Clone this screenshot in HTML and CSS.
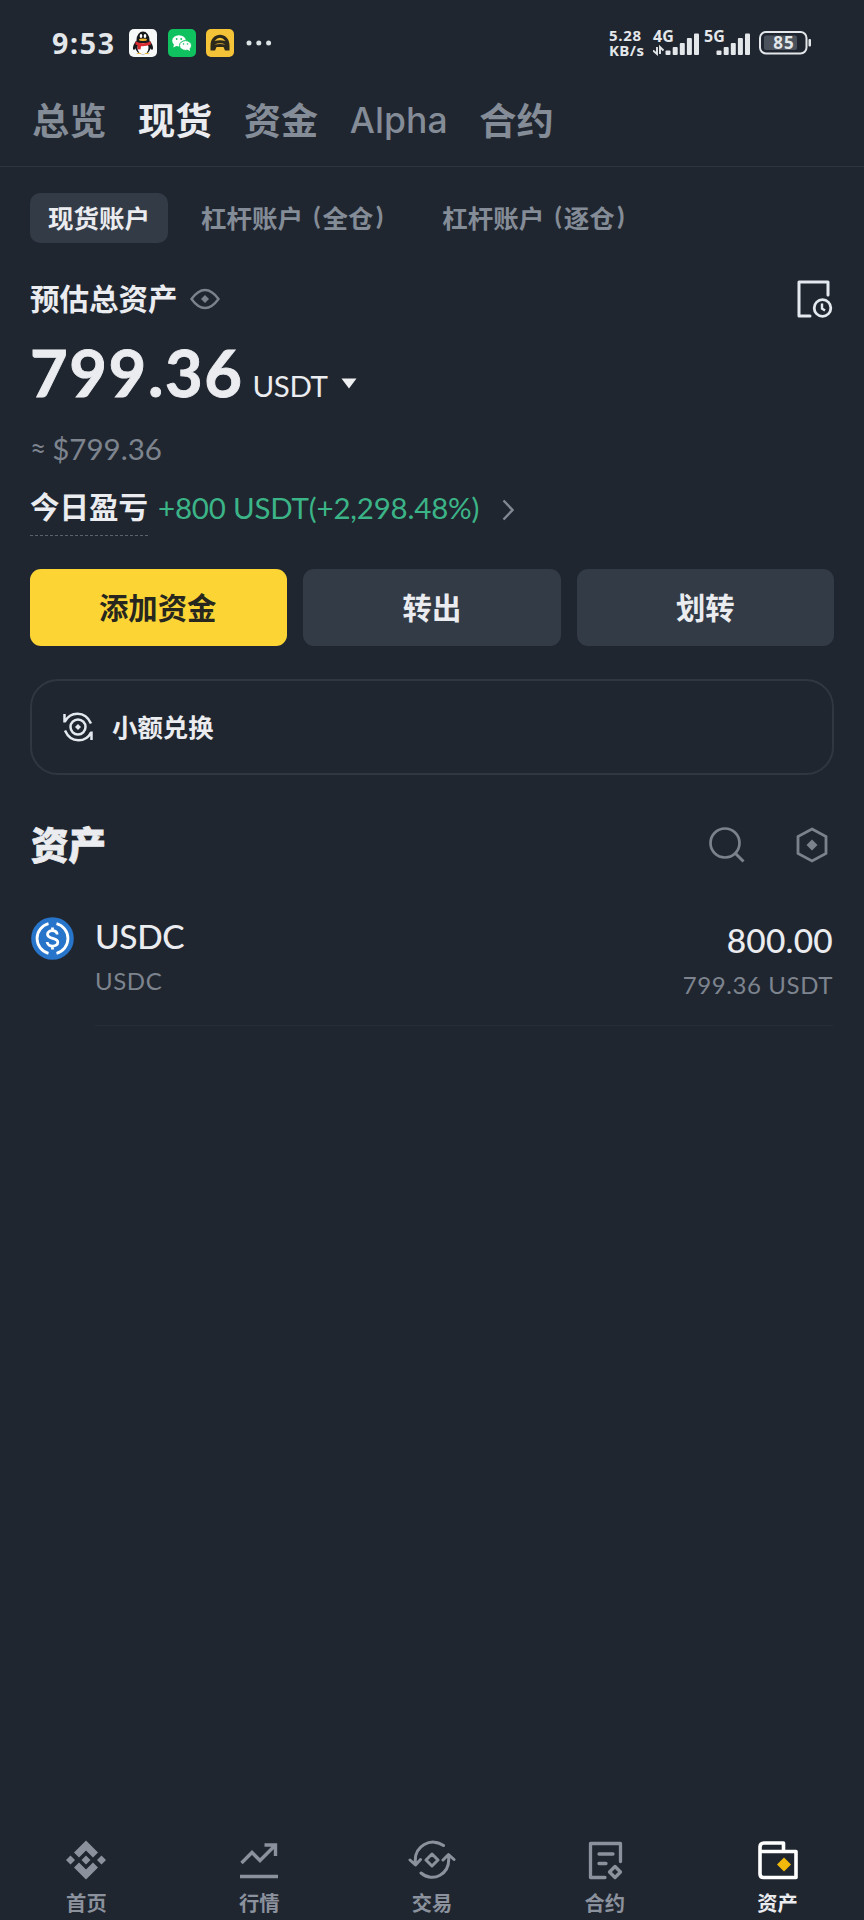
FILE: index.html
```html
<!DOCTYPE html>
<html lang="zh-CN">
<head>
<meta charset="utf-8">
<title>资产</title>
<link rel="stylesheet" href="styles.css">
</head>
<body>
<div class="screen">
  <header class="status">
    <span class="clock">9:53</span>
    <svg class="app" viewBox="0 0 28 28"><rect width="28" height="28" rx="5" fill="#f7f8f8"/><path d="M7 12C4 16 3 20 5 21l3-3zM21 12c3 4 4 8 2 9l-3-3z" fill="#16181b"/><ellipse cx="14" cy="17" rx="8" ry="8.500" fill="#16181b"/><ellipse cx="14" cy="19" rx="5.500" ry="6.500" fill="#fff"/><path d="M7.500 11a6.500 8.500 0 0 1 13 0l0 3h-13z" fill="#16181b"/><ellipse cx="12" cy="7" rx="1.300" ry="1.900" fill="#fff"/><ellipse cx="16" cy="7" rx="1.300" ry="1.900" fill="#fff"/><ellipse cx="14" cy="10.700" rx="4" ry="1.200" fill="#efb52c"/><path d="M6.500 12.500q7.500 3.500 15 0l.5 3q-5 2-10 1.700l-.5 3.300-3-.3.200-4-2.200-.7z" fill="#d92c30"/><path d="M7 25q3-2 6 0zM15 25q3-2 6 0z" fill="#efb52c"/></svg>
    <svg class="app" viewBox="0 0 28 28"><rect width="28" height="28" rx="5" fill="#10c160"/><ellipse cx="11" cy="11.800" rx="6.800" ry="5.600" fill="#fff"/><path d="M6 15l-.7 3.500 4-2z" fill="#fff"/><ellipse cx="17.500" cy="16.500" rx="6" ry="4.900" fill="#fff" stroke="#10c160"/><path d="M19 20.500l3 1.500-.5-3z" fill="#fff"/><g fill="#10c160"><circle cx="8.700" cy="10" r=".9"/><circle cx="13.200" cy="10" r=".9"/><circle cx="15.500" cy="15" r=".8"/><circle cx="19.500" cy="15" r=".8"/></g></svg>
    <svg class="app" viewBox="0 0 28 28"><rect width="28" height="28" rx="5" fill="#f5c338"/><path d="M4.500 21.500v-5C4.500 2 23.500 2 23.500 16.500v5h-4.500l-1.500-3.500h-7L9 21.500z" fill="#2b281c"/><path d="M8.500 12Q14 5.500 19.500 12 14 10.500 8.500 12zM8.500 15.500q5.500-2.500 11 0-5.500-.8-11 0z" fill="#f5c338"/></svg>
    <svg class="more" viewBox="0 0 26 6"><g fill="#dde2e5"><circle cx="3" cy="3" r="2.500"/><circle cx="12.800" cy="3" r="2.500"/><circle cx="22.600" cy="3" r="2.500"/></g></svg>
    <span class="speed"><span>5.28</span><span class="unit">KB/s</span></span>
    <span class="signal"><span class="net">4G</span><svg viewBox="0 0 46 28"><g fill="#e3e7ea"><rect x="12.500" y="21.500" width="5" height="4.500" rx="1"/><rect x="19.700" y="18" width="5" height="8" rx="1"/><rect x="26.800" y="14" width="5" height="12" rx="1"/><rect x="33.900" y="9" width="5" height="17" rx="1"/><rect x="41" y="4.500" width="5" height="21.500" rx="1"/></g><path d="M4 18v7L0 21.500M7 25v-7l3.500 3.500" fill="none" stroke="#e3e7ea" stroke-width="1.900"/></svg></span>
    <span class="signal second"><span class="net">5G</span><svg viewBox="0 0 46 28"><g fill="#e3e7ea"><rect x="12.500" y="21.500" width="5" height="4.500" rx="1"/><rect x="19.700" y="18" width="5" height="8" rx="1"/><rect x="26.800" y="14" width="5" height="12" rx="1"/><rect x="33.900" y="9" width="5" height="17" rx="1"/><rect x="41" y="4.500" width="5" height="21.500" rx="1"/></g></svg></span>
    <svg class="battery" viewBox="0 0 53 24"><rect x="1" y="1" width="46.500" height="21.500" rx="6" fill="none" stroke="#e3e7ea" stroke-width="2"/><rect x="5" y="4.500" width="33" height="14.500" rx="2" fill="#4b525b"/><rect x="49.500" y="8" width="2.500" height="7.500" rx="1" fill="#e3e7ea"/><text x="25" y="18" class="level">85</text></svg>
  </header>

  <nav class="tabs">
    <span>总览</span><span class="on">现货</span><span>资金</span><span class="alpha">Alpha</span><span>合约</span>
  </nav>

  <main class="content">
    <div class="pills">
      <span class="pill on">现货账户</span>
      <span class="pill">杠杆账户<i>(</i>全仓<b>)</b></span>
      <span class="pill">杠杆账户<i>(</i>逐仓<b>)</b></span>
    </div>

    <div class="estimate">
      <span>预估总资产</span>
      <svg class="eye" viewBox="0 0 30 22"><path d="M1.500 11Q8 2 15 2t13.500 9Q22 20 15 20T1.500 11z" fill="none" stroke="#7b828c" stroke-width="2.400"/><path d="M15 7l4 4-4 4-4-4z" fill="#7b828c"/></svg>
      <svg class="record" viewBox="0 0 36 38"><path d="M13 36H2V2h29v13" fill="none" stroke="#e4e9ef" stroke-width="3" stroke-linecap="round" stroke-linejoin="round"/><circle cx="25.500" cy="28" r="8.300" fill="none" stroke="#e4e9ef" stroke-width="2.800"/><path d="M25 23.500v5l3 2" fill="none" stroke="#e4e9ef" stroke-width="2.400"/></svg>
    </div>

    <div class="amount">
      <span class="total">799.36</span><span class="coin">USDT</span>
      <svg class="caret" viewBox="0 0 16 11"><path d="M.5.500h15L8 10.500z" fill="#eef0f2"/></svg>
    </div>
    <div class="fiat"><span class="approx">≈</span><span>$799.36</span></div>
    <div class="pnl">
      <span class="pnl-label">今日盈亏</span><span class="gain">+800 USDT(+2,298.48%)</span>
      <svg class="chevron" viewBox="0 0 12 22"><path d="M1.500 1.500l9 9.500-9 9.500" fill="none" stroke="#818893" stroke-width="2.400"/></svg>
    </div>

    <div class="actions">
      <span class="action primary">添加资金</span><span class="action">转出</span><span class="action">划转</span>
    </div>

    <div class="convert">
      <svg class="swap" viewBox="0 0 30 30"><g fill="none" stroke="#e4e9ef" stroke-width="2.500"><path d="M1.500 2v8.500M2 9.500C7-.5 22-2 28 11.500M28.500 28v-8.500M28 20.500C23 30.500 8 32 2 18.500"/><circle cx="15" cy="15" r="7.500"/></g><path d="M15 12l3 3-3 3-3-3z" fill="#e4e9ef"/></svg>
      <span>小额兑换</span>
    </div>

    <div class="heading">
      <h2>资产</h2>
      <svg class="search" viewBox="0 0 36 36"><circle cx="16" cy="16" r="14.500" fill="none" stroke="#7b828c" stroke-width="2.700"/><path d="M26 26l8.500 8.500" stroke="#7b828c" stroke-width="3"/></svg>
      <svg class="hex" viewBox="0 0 32 36"><path d="M16 2l14 7.500v17L16 34 2 26.500v-17z" fill="none" stroke="#7b828c" stroke-width="2.800"/><path d="M16 12.500l5.500 5.500-5.500 5.500-5.500-5.500z" fill="#7b828c"/></svg>
    </div>

    <div class="asset">
      <svg class="usdc" viewBox="0 0 43 43"><circle cx="21.500" cy="21.500" r="21.300" fill="#2775ca"/><g fill="none" stroke="#fff" stroke-width="2.800"><path d="M17.500 6.700a15.300 15.300 0 0 0 0 29.600M25.500 6.700a15.300 15.300 0 0 1 0 29.600"/><path d="M26.200 17.500c-.4-5-9.700-5-9.700-.2 0 5.500 10.300 2.600 10.300 8 0 5.200-10.300 5-10.600-.3M21.500 10.500v3.500M21.500 29v3.500"/></g></svg>
      <div class="asset-info">
        <div class="asset-name"><span class="big">USDC</span><span class="small">USDC</span></div>
        <div class="asset-value"><span class="big value">800.00</span><span class="small">799.36 USDT</span></div>
      </div>
    </div>
  </main>

  <nav class="bottom">
    <div class="item"><svg viewBox="0 0 40 40"><g fill="#8b929d"><path d="M20 .5l12 12-5 5-7-7-7 7-5-5zM20 39.500l12-12-5-5-7 7-7-7-5 5zM20 15.500l4.500 4.500-4.500 4.500-4.500-4.500zM4.500 15.500L9 20l-4.500 4.500L0 20zM35.500 15.500L40 20l-4.500 4.500L31 20z"/></g></svg><span>首页</span></div>
    <div class="item"><svg viewBox="0 0 40 40"><path d="M2.500 23L13 12.500l8 8L36 5.500M25.500 5H36.500v11M1 36.500h38" fill="none" stroke="#8b929d" stroke-width="3.400"/></svg><span>行情</span></div>
    <div class="item"><svg class="wide" viewBox="0 0 48 40"><g fill="none" stroke="#8b929d" stroke-width="3" stroke-linecap="round" stroke-linejoin="round"><path d="M7.500 24C5 5 24-3 35.500 5.500M2 20l5.500 5 5-5.500M40.500 15c2.500 20-16 28-27.500 18M35 20l5.500-5.500 5.500 5M24 14l6 6-6 6-6-6z"/></g></svg><span>交易</span></div>
    <div class="item"><svg viewBox="0 0 40 40"><g fill="none" stroke="#8b929d" stroke-width="3.300" stroke-linecap="round" stroke-linejoin="round"><path d="M20 37.500H5.500v-34h30v18M14 14h14M14 23.500h7M30 26.500l5.500 5.500-5.500 5.500-5.500-5.500z"/></g></svg><span>合约</span></div>
    <div class="item on"><svg viewBox="0 0 40 40"><path d="M2 10v24q0 3.500 3.500 3.500h32.500V11.500H2M2 11.500V7q0-4 4-4h19.500v8" fill="none" stroke="#fff" stroke-width="3.600" stroke-linejoin="round"/><path d="M26 17.500l7 7-7 7-7-7z" fill="#f0b90b"/></svg><span>资产</span></div>
  </nav>
</div>
</body>
</html>
```
FILE: styles.css
```css
* { box-sizing: border-box; }
body { margin: 0; background: #202630; }
svg { display: block; flex: none; }
.screen { width: 864px; height: 1920px; display: flex; flex-direction: column; background: #202630; color: #eaecef; font-family: Lato, "Noto Sans CJK SC", sans-serif; white-space: nowrap; overflow: hidden; }

.status { height: 86px; display: flex; align-items: center; padding: 0 52px; flex: none; }
.clock { width: 77px; font: 700 28.500px/40px "Noto Sans", sans-serif; letter-spacing: 1.7px; color: #e3e7ea; }
.app { width: 28px; height: 28px; margin-right: 10.500px; }
.more { width: 26px; height: 6px; margin-left: 1px; }
.speed { margin-left: auto; width: 44px; display: flex; flex-direction: column; font: 700 15px/15px "Open Sans", "Noto Sans", sans-serif; letter-spacing: 0.7px; color: #e3e7ea; }
.unit { letter-spacing: 0.4px; }
.signal { position: relative; width: 46px; height: 28px; }
.signal svg { width: 46px; height: 28px; }
.second { margin-left: 5px; }
.net { position: absolute; left: 0; top: -3px; font: 700 16px/20px "Noto Sans", sans-serif; color: #e3e7ea; }
.battery { width: 53px; height: 24px; margin-left: 9px; }
.level { font: 700 17px "Noto Sans", sans-serif; fill: #e3e7ea; text-anchor: middle; letter-spacing: 1px; }

.tabs { height: 81px; flex: none; display: flex; align-items: center; gap: 31.500px; padding: 0 32px 14px; border-bottom: 1px solid #2e353f; font-size: 37.200px; font-weight: 700; color: #848c97; }
.tabs .on { color: #eaecef; }
.alpha { font: 500 35.500px Inter, sans-serif; letter-spacing: 0.1px; padding-top: 2px; }

.content { padding: 26px 30px 0; flex: 1; }
.pills { height: 50px; display: flex; }
.pill { display: flex; align-items: center; padding: 0 18px 3px; border-radius: 10px; font-size: 25.500px; font-weight: 700; color: #848c97; }
.pill + .pill { margin-left: 15px; }
.pill i { font-style: normal; margin: 0 2px 4px 10.500px; }
.pill b { margin: 0 8px 4px 2.500px; }
.pill.on { background: #333b47; color: #eaecef; }

.estimate { height: 88px; padding-top: 23px; display: flex; align-items: center; font-size: 29.500px; font-weight: 700; }
.estimate span { padding-bottom: 3px; }
.eye { width: 30px; height: 22px; margin-left: 12px; }
.record { width: 36px; height: 38px; margin: 1px 1px 0 auto; }
.amount { height: 82px; display: flex; align-items: baseline; line-height: 83px; }
.total { font-size: 65px; font-weight: 700; letter-spacing: 1.6px; -webkit-text-stroke: 0.9px #eaecef; }
.coin { font-size: 29.500px; margin-left: 9px; letter-spacing: -0.4px; }
.caret { width: 16px; height: 11px; margin: 23px 0 0 13px; align-self: center; }
.fiat { height: 71px; line-height: 71px; display: flex; gap: 6px; font-size: 29.500px; color: #7d848e; }
.approx { font-size: 28px; }
.pnl { height: 52px; display: flex; align-items: center; }
.pnl-label { height: 52px; line-height: 46px; font-size: 29.500px; font-weight: 700; border-bottom: 1px dashed #5b626c; }
.gain { margin-left: 10px; padding-bottom: 6px; font-size: 29.500px; letter-spacing: -0.2px; color: #3bb487; }
.chevron { width: 12px; height: 22px; margin-left: 23px; }

.actions { margin-top: 33px; height: 77px; display: grid; grid-template-columns: repeat(3, 1fr); gap: 16px; }
.action { display: flex; align-items: center; justify-content: center; padding-bottom: 3px; border-radius: 11px; background: #333b47; font-size: 29.400px; font-weight: 700; }
.primary { background: #fcd535; color: #27271f; padding-right: 2px; }
.convert { margin-top: 33px; height: 96px; display: flex; align-items: center; gap: 19px; padding-left: 31px; border: 2px solid #303741; border-radius: 28px; font-size: 25.400px; font-weight: 700; }
.convert span { padding-bottom: 2px; }
.swap { width: 30px; height: 30px; }
.heading { margin-top: 39px; height: 62px; display: flex; align-items: center; padding-right: 6px; }
h2 { margin: 0 auto 0 1px; font-size: 37.500px; line-height: 62px; font-weight: 900; -webkit-text-stroke: 0.8px #eaecef; }
.search { width: 36px; height: 36px; }
.hex { width: 32px; height: 36px; margin-left: 51px; }
.asset { margin-top: 40px; height: 110px; display: flex; padding: 0 1px; }
.usdc { width: 43px; height: 43px; margin-top: 1px; }
.asset-info { flex: 1; display: flex; justify-content: space-between; margin-left: 21px; border-bottom: 1px solid #262d37; }
.asset-name, .asset-value { display: flex; flex-direction: column; }
.asset-value { padding-top: 4px; text-align: right; }
.big { font-size: 33.500px; line-height: 41px; font-weight: 500; letter-spacing: -0.4px; }
.value { letter-spacing: 0.2px; }
.small { margin-top: 3px; font-size: 24px; line-height: 41px; letter-spacing: 0.6px; color: #7d848e; }

.bottom { height: 90px; flex: none; display: grid; grid-template-columns: repeat(5, 1fr); }
.item { display: flex; flex-direction: column; align-items: center; padding-top: 10px; font-size: 20.300px; font-weight: 700; line-height: 30px; color: #8b929d; }
.item svg { width: 40px; height: 40px; margin-bottom: 8px; }
.item .wide { width: 48px; }
.item.on { color: #eaecef; }
```
